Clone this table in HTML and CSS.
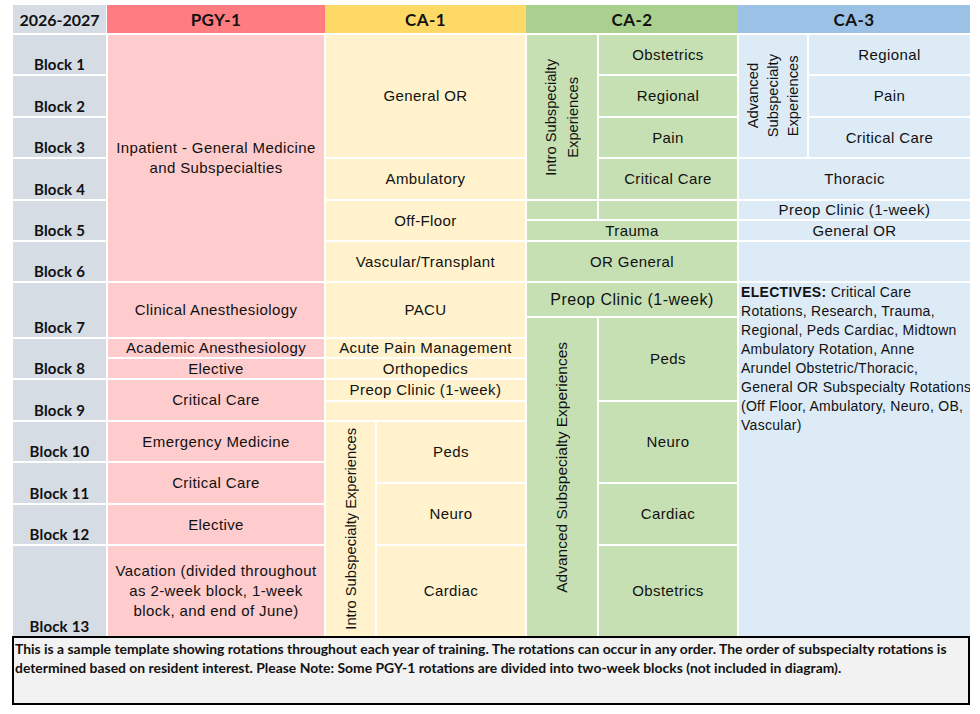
FILE: index.html
```html
<!DOCTYPE html>
<html lang="en">
<head>
<meta charset="utf-8">
<title>Residency Rotation Template 2026-2027</title>
<link rel="stylesheet" href="styles.css">
</head>
<body>
<div class="page">
  <div class="head">
    <div class="hcell h-year">2026-2027</div>
    <div class="hcell h-pgy">PGY-1</div>
    <div class="hcell h-ca1">CA-1</div>
    <div class="hcell h-ca2">CA-2</div>
    <div class="hcell h-ca3">CA-3</div>
  </div>

  <div class="grid">
    <!-- block labels -->
    <div class="blk r1-2">Block 1</div>
    <div class="blk r2-3">Block 2</div>
    <div class="blk r3-4">Block 3</div>
    <div class="blk r4-5">Block 4</div>
    <div class="blk r5-7">Block 5</div>
    <div class="blk r7-8">Block 6</div>
    <div class="blk r8-10">Block 7</div>
    <div class="blk r10-12">Block 8</div>
    <div class="blk r12-14">Block 9</div>
    <div class="blk r14-15">Block 10</div>
    <div class="blk r15-17">Block 11</div>
    <div class="blk r17-18">Block 12</div>
    <div class="blk r18-19">Block 13</div>

    <!-- PGY-1 -->
    <div class="cell pgy r1-8">Inpatient - General Medicine<br>and Subspecialties</div>
    <div class="cell pgy r8-10">Clinical Anesthesiology</div>
    <div class="cell pgy r10-11">Academic Anesthesiology</div>
    <div class="cell pgy r11-12">Elective</div>
    <div class="cell pgy r12-14">Critical Care</div>
    <div class="cell pgy r14-15">Emergency Medicine</div>
    <div class="cell pgy r15-17">Critical Care</div>
    <div class="cell pgy r17-18">Elective</div>
    <div class="cell pgy r18-19">Vacation (divided throughout<br>as 2-week block, 1-week<br>block, and end of June)</div>

    <!-- CA-1 -->
    <div class="cell ca1 c3-5 r1-4">General OR</div>
    <div class="cell ca1 c3-5 r4-5">Ambulatory</div>
    <div class="cell ca1 c3-5 r5-7">Off-Floor</div>
    <div class="cell ca1 c3-5 r7-8">Vascular/Transplant</div>
    <div class="cell ca1 c3-5 r8-10">PACU</div>
    <div class="cell ca1 c3-5 r10-11">Acute Pain Management</div>
    <div class="cell ca1 c3-5 r11-12">Orthopedics</div>
    <div class="cell ca1 c3-5 r12-13">Preop Clinic (1-week)</div>
    <div class="cell ca1 c3-5 r13-14"></div>
    <div class="cell ca1 c3-4 r14-19"><span class="vert">Intro Subspecialty Experiences</span></div>
    <div class="cell ca1 c4-5 r14-16">Peds</div>
    <div class="cell ca1 c4-5 r16-18">Neuro</div>
    <div class="cell ca1 c4-5 r18-19">Cardiac</div>

    <!-- CA-2 -->
    <div class="cell ca2 c5-6 r1-5"><span class="vert vert-wide">Intro Subspecialty<br>Experiences</span></div>
    <div class="cell ca2 c6-7 r1-2">Obstetrics</div>
    <div class="cell ca2 c6-7 r2-3">Regional</div>
    <div class="cell ca2 c6-7 r3-4">Pain</div>
    <div class="cell ca2 c6-7 r4-5">Critical Care</div>
    <div class="cell ca2 c5-6 r5-6"></div>
    <div class="cell ca2 c6-7 r5-6"></div>
    <div class="cell ca2 c5-7 r6-7">Trauma</div>
    <div class="cell ca2 c5-7 r7-8">OR General</div>
    <div class="cell ca2 c5-7 r8-9 big">Preop Clinic (1-week)</div>
    <div class="cell ca2 c5-6 r9-19 adv"><span class="vert">Advanced Subspecialty Experiences</span></div>
    <div class="cell ca2 c6-7 r9-13">Peds</div>
    <div class="cell ca2 c6-7 r13-16">Neuro</div>
    <div class="cell ca2 c6-7 r16-18">Cardiac</div>
    <div class="cell ca2 c6-7 r18-19">Obstetrics</div>

    <!-- CA-3 -->
    <div class="cell ca3 c7-8 r1-4"><span class="vert vert-tight">Advanced<br>Subspecialty<br>Experiences</span></div>
    <div class="cell ca3 c8-9 r1-2">Regional</div>
    <div class="cell ca3 c8-9 r2-3">Pain</div>
    <div class="cell ca3 c8-9 r3-4">Critical Care</div>
    <div class="cell ca3 c7-9 r4-5">Thoracic</div>
    <div class="cell ca3 c7-9 r5-6">Preop Clinic (1-week)</div>
    <div class="cell ca3 c7-9 r6-7">General OR</div>
    <div class="cell ca3 c7-9 r7-8"></div>
    <div class="cell ca3 c7-9 r8-19 electives"><p><b>ELECTIVES:</b> Critical Care<br>Rotations, Research, Trauma,<br>Regional, Peds Cardiac, Midtown<br>Ambulatory Rotation, Anne<br>Arundel Obstetric/Thoracic,<br>General OR Subspecialty Rotations<br>(Off Floor, Ambulatory, Neuro, OB,<br>Vascular)</p></div>
  </div>

  <div class="note">This is a sample template showing rotations throughout each year of training. The rotations can occur in any order. The order of subspecialty rotations is<br>determined based on resident interest. Please Note: Some PGY-1 rotations are divided into two-week blocks (not included in diagram).</div>
</div>
</body>
</html>
```

FILE: styles.css
```css
html, body {
  margin: 0;
  padding: 0;
  background: #ffffff;
}

.page {
  padding: 5px 0 0 13px;
  width: 957px;
}

/* header row */
.head {
  display: flex;
  height: 28px;
  margin-bottom: 2px;
}
.hcell {
  display: flex;
  align-items: center;
  justify-content: center;
  font-family: "Lato", "Liberation Sans", sans-serif;
  font-weight: 700;
  font-size: 17px;
  letter-spacing: 0.4px;
  color: #111;
}
.h-year { width: 93px; background: #d6dce4; margin-right: 1px; font-size: 16px; letter-spacing: 0; }
.h-pgy  { width: 218px; background: #ff7c80; }
.h-ca1  { width: 201px; background: #ffd966; }
.h-ca2  { width: 212px; background: #a9d08e; }
.h-ca3  { width: 232px; background: #9bc2e6; }

/* main grid */
.grid {
  display: grid;
  grid-template-columns: 93px 216px 49px 148px 70px 138px 68px 161px;
  grid-template-rows: 39px 40px 39px 40px 18px 19px 39px 33px 19px 18px 19px 20px 18px 39px 19px 19px 39px 90px;
  gap: 2px;
}

.blk {
  grid-column: 1 / 2;
  background: #d6dce4;
  display: flex;
  align-items: flex-end;
  justify-content: center;
  font-family: "Lato", "Liberation Sans", sans-serif;
  font-weight: 700;
  font-size: 15px;
  letter-spacing: 0.2px;
  line-height: 18px;
  padding-bottom: 1px;
  color: #111;
}

.cell {
  display: flex;
  align-items: center;
  justify-content: center;
  text-align: center;
  font-family: "Liberation Sans", Arial, sans-serif;
  font-size: 15px;
  letter-spacing: 0.4px;
  line-height: 20px;
  color: #111;
  overflow: hidden;
}
.cell.big { font-size: 16px; letter-spacing: 0.5px; }

.pgy { grid-column: 2 / 3; background: #ffcccd; }
.ca1 { background: #fff2cc; }
.ca2 { background: #c6e0b4; }
.ca3 { background: #ddebf7; }

/* column spans */
.c3-4 { grid-column: 3 / 4; }
.c3-5 { grid-column: 3 / 5; }
.c4-5 { grid-column: 4 / 5; }
.c5-6 { grid-column: 5 / 6; }
.c5-7 { grid-column: 5 / 7; }
.c6-7 { grid-column: 6 / 7; }
.c7-8 { grid-column: 7 / 8; }
.c7-9 { grid-column: 7 / 9; }
.c8-9 { grid-column: 8 / 9; }

/* row spans */
.r1-2 { grid-row: 1 / 2; }
.r1-4 { grid-row: 1 / 4; }
.r1-5 { grid-row: 1 / 5; }
.r1-8 { grid-row: 1 / 8; }
.r2-3 { grid-row: 2 / 3; }
.r3-4 { grid-row: 3 / 4; }
.r4-5 { grid-row: 4 / 5; }
.r5-6 { grid-row: 5 / 6; }
.r5-7 { grid-row: 5 / 7; }
.r6-7 { grid-row: 6 / 7; }
.r7-8 { grid-row: 7 / 8; }
.r8-9 { grid-row: 8 / 9; }
.r8-10 { grid-row: 8 / 10; }
.r8-19 { grid-row: 8 / 19; }
.r9-13 { grid-row: 9 / 13; }
.r9-19 { grid-row: 9 / 19; }
.r10-11 { grid-row: 10 / 11; }
.r10-12 { grid-row: 10 / 12; }
.r11-12 { grid-row: 11 / 12; }
.r12-13 { grid-row: 12 / 13; }
.r12-14 { grid-row: 12 / 14; }
.r13-14 { grid-row: 13 / 14; }
.r13-16 { grid-row: 13 / 16; }
.r14-15 { grid-row: 14 / 15; }
.r14-16 { grid-row: 14 / 16; }
.r14-19 { grid-row: 14 / 19; }
.r15-17 { grid-row: 15 / 17; }
.r16-18 { grid-row: 16 / 18; }
.r17-18 { grid-row: 17 / 18; }
.r18-19 { grid-row: 18 / 19; }

/* rotated labels */
.vert {
  writing-mode: vertical-rl;
  transform: rotate(180deg);
  white-space: nowrap;
  text-align: center;
  font-size: 14.7px;
  letter-spacing: 0;
  line-height: 18px;
}
.vert-wide { line-height: 22px; }
.vert-tight { line-height: 20px; }
.adv { padding-bottom: 20px; }
.adv .vert { font-size: 15.5px; }

/* electives block */
.electives {
  align-items: flex-start;
  justify-content: flex-start;
  text-align: left;
  font-size: 14px;
  letter-spacing: 0.28px;
}
.electives p {
  margin: 0;
  padding: 0 0 0 2px;
  line-height: 19px;
  white-space: nowrap;
}
.electives b { font-weight: 700; letter-spacing: 0.3px; }

/* footnote */
.note {
  box-sizing: border-box;
  margin-left: -1px;
  width: 958px;
  height: 69px;
  border: 2px solid #000;
  background: #f2f2f2;
  padding: 1px 0 0 1px;
  font-family: "Lato", "Liberation Sans", sans-serif;
  font-weight: 700;
  font-size: 13.9px;
  line-height: 19px;
  color: #111;
  white-space: nowrap;
  overflow: hidden;
}
```
